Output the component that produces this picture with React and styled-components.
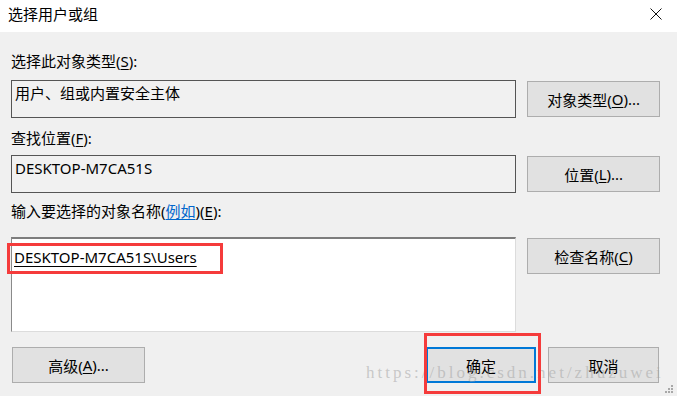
import React from "react";
import styled, { createGlobalStyle } from "styled-components";

const GlobalStyle = createGlobalStyle`
  body {
    margin: 0;
    font-family: "Noto Sans", "Noto Sans CJK SC", sans-serif;
    font-size: 15px;
    color: #000;
  }
`;

const Dialog = styled.div`
  position: relative;
  width: 677px;
  height: 396px;
  overflow: hidden;
  background: #f0f0f0;
`;

const TitleBar = styled.div`
  height: 32px;
  box-sizing: border-box;
  padding: 0 15px 4px 8px;
  background: #fff;
  display: flex;
  align-items: center;
  justify-content: space-between;
  line-height: 20px;
`;

const Body = styled.div`
  padding: 0 17px 0 11px;
`;

const Label = styled.div`
  height: 20px;
  line-height: 20px;
  margin-top: ${(p) => p.$top}px;
  margin-bottom: ${(p) => p.$bottom}px;
`;

const Key = styled.span`
  text-decoration: underline;
  text-underline-offset: 2px;
`;

const Link = styled.span`
  color: #0066cc;
  text-decoration: underline;
  text-underline-offset: 2px;
`;

const Row = styled.div`
  display: flex;
  gap: 11px;
  align-items: flex-start;
`;

const Field = styled.div`
  width: 506px;
  height: 38px;
  box-sizing: border-box;
  border: 1px solid #555;
  background: #f1f1f1;
  padding: 2px 3px;
  line-height: 20px;
  white-space: nowrap;
`;

const NameBox = styled.div`
  width: 506px;
  height: 95px;
  box-sizing: border-box;
  background: #fff;
  border-top: 2px solid #7d7d7d;
  border-left: 1px solid #8a8a8a;
  border-right: 1px solid #dcdcdc;
  border-bottom: 1px solid #dcdcdc;
  padding: 8px 2px;
  line-height: 20px;
`;

const Entry = styled.span`
  text-decoration: underline;
  text-underline-offset: 3px;
`;

const Button = styled.button`
  width: ${(p) => p.$w}px;
  height: 36px;
  margin-top: ${(p) => p.$mt || 0}px;
  box-sizing: border-box;
  background: #e1e1e1;
  border: ${(p) => (p.$default ? "2px solid #0078d7" : "1px solid #adadad")};
  font-family: inherit;
  font-size: 15px;
  color: #000;
  padding: 0;
  display: flex;
  align-items: center;
  justify-content: center;
`;

const Footer = styled.div`
  margin-top: 15px;
  padding-left: 1px;
  display: flex;
  justify-content: space-between;
`;

const Group = styled.div`
  display: flex;
  gap: 12px;
  margin-right: 1px;
`;

const Mark = styled.div`
  position: absolute;
  left: ${(p) => p.$x}px;
  top: ${(p) => p.$y}px;
  width: ${(p) => p.$w}px;
  height: ${(p) => p.$h}px;
  box-sizing: border-box;
  border: 3px solid #f53b3b;
  pointer-events: none;
`;

const Watermark = styled.div`
  position: absolute;
  left: 366px;
  top: 363px;
  font-family: "Liberation Serif", serif;
  font-size: 17px;
  letter-spacing: 3px;
  line-height: 20px;
  white-space: nowrap;
  color: rgba(165, 165, 165, 0.55);
  pointer-events: none;
`;

const Grip = styled.svg`
  position: absolute;
  right: 4px;
  bottom: 3px;
`;

const CloseIcon = () => (
  <svg width="12" height="12" viewBox="0 0 12 12">
    <path d="M0.5 0.5 L11.5 11.5 M11.5 0.5 L0.5 11.5" stroke="#111" strokeWidth="1" fill="none" />
  </svg>
);

export default function App() {
  return (
    <>
      <GlobalStyle />
      <Dialog>
        <TitleBar>
          <span>选择用户或组</span>
          <CloseIcon />
        </TitleBar>
        <Body>
          <Label $top={19} $bottom={9}>
            选择此对象类型(<Key>S</Key>):
          </Label>
          <Row>
            <Field>用户、组或内置安全主体</Field>
            <Button $w={133} $mt={1}>
              对象类型(<Key>O</Key>)...
            </Button>
          </Row>
          <Label $top={10} $bottom={7}>
            查找位置(<Key>F</Key>):
          </Label>
          <Row>
            <Field>DESKTOP-M7CA51S</Field>
            <Button $w={133} $mt={1}>
              位置(<Key>L</Key>)...
            </Button>
          </Row>
          <Label $top={8} $bottom={16}>
            输入要选择的对象名称(<Link>例如</Link>)(<Key>E</Key>):
          </Label>
          <Row>
            <NameBox>
              <Entry>DESKTOP-M7CA51S\Users</Entry>
            </NameBox>
            <Button $w={133} $mt={1}>
              检查名称(<Key>C</Key>)
            </Button>
          </Row>
          <Footer>
            <Button $w={133}>
              高级(<Key>A</Key>)...
            </Button>
            <Group>
              <Button $w={110} $default>
                确定
              </Button>
              <Button $w={111}>取消</Button>
            </Group>
          </Footer>
        </Body>
        <Watermark>https://blog.csdn.net/zhuzuwei</Watermark>
        <Grip width="9" height="9" viewBox="0 0 9 9">
          <g fill="#a8a8a8">
            <rect x="7" y="1" width="2" height="2" />
            <rect x="4" y="4" width="2" height="2" />
            <rect x="7" y="4" width="2" height="2" />
            <rect x="1" y="7" width="2" height="2" />
            <rect x="4" y="7" width="2" height="2" />
            <rect x="7" y="7" width="2" height="2" />
          </g>
        </Grip>
        <Mark $x={7} $y={243} $w={216} $h={31} />
        <Mark $x={424} $y={333} $w={117} $h={61} />
      </Dialog>
    </>
  );
}
